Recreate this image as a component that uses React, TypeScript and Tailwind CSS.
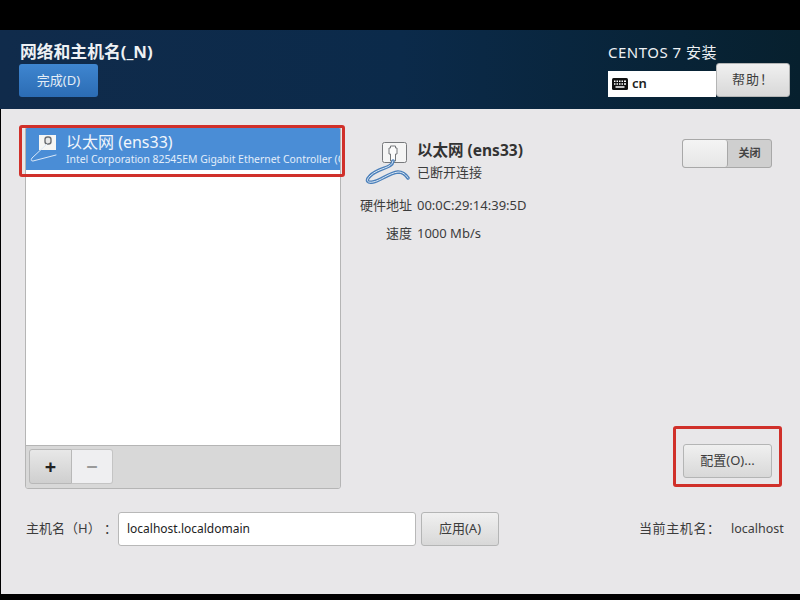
import React from "react";

const FONT = "font-['Noto_Sans','Noto_Sans_CJK_SC',sans-serif]";

const CableIcon = () => (
  <svg width="48" height="46" viewBox="0 0 48 46" fill="none">
    <rect x="17.5" y="1.5" width="24" height="20" rx="2" fill="#f5f5f5" stroke="#77797c" />
    <path d="M25.5 7 V5 H30.5 V7 H32 V13 H30.5 V20 H25.5 V13 H24 V7 Z" fill="#fbfbfb" stroke="#74777a" strokeWidth="1" />
    <path d="M28 20 C27 28 14 26 5 35 C0 40 3 42 8 41 C15 40 24 32 33 31 C38 31 41 34 43 37" stroke="#4a7fba" strokeWidth="3.4" strokeLinecap="round" />
    <path d="M28 20 C27 28 14 26 5 35 C0 40 3 42 8 41 C15 40 24 32 33 31 C38 31 41 34 43 37" stroke="#dce8f4" strokeWidth="1" strokeLinecap="round" />
  </svg>
);

const CableIconSelected = () => (
  <svg width="38" height="42" viewBox="0 0 38 42" fill="none">
    <rect x="10" y="7" width="17" height="15" fill="#f6f6f4" />
    <rect x="16" y="9" width="6" height="7" rx="2.5" fill="#e8e8e8" stroke="#6d6f72" strokeWidth="1.4" />
    <path d="M18 16 L3 30 Q1 33 4 33 L27 27" stroke="#dbe8f7" strokeWidth="1" strokeLinecap="round" />
  </svg>
);

const KeyboardIcon = () => (
  <svg width="16" height="12" viewBox="0 0 16 12">
    <rect width="16" height="12" rx="1.5" fill="#111" />
    <path d="M2 2.5h1.5v1.5H2zM4.5 2.5H6v1.5H4.5zM7 2.5h1.5v1.5H7zM9.5 2.5H11v1.5H9.5zM12 2.5h2v1.5h-2zM2 5.2h1.5v1.5H2zM4.5 5.2H6v1.5H4.5zM7 5.2h1.5v1.5H7zM9.5 5.2H11v1.5H9.5zM12 5.2h2v1.5h-2zM3.5 8.2h9v1.5h-9z" fill="#fff" />
  </svg>
);

const grayButton =
  "flex items-center justify-center rounded-[3px] border border-[#b4b5b5] bg-gradient-to-b from-[#f0f0f0] to-[#d8d8d8] text-[#3c3c3c]";

export default function App() {
  return (
    <div className={`${FONT} flex h-[600px] w-[800px] flex-col overflow-hidden bg-black`}>
      <div className="h-[30px] shrink-0 bg-black" />

      {/* header */}
      <div className="flex h-[79px] shrink-0 justify-between bg-gradient-to-r from-[#102b4b] via-[#0b2a4a] to-[#07202e] pr-[10px] pl-[19px]">
        <div className="flex flex-col">
          <div className="mt-[12px] ml-px h-[22px] text-[16.8px] leading-[20px] font-bold text-[#eef1f4]">网络和主机名(_N)</div>
          <button className="flex h-[33px] w-[79px] items-center justify-center rounded-[3px] bg-gradient-to-b from-[#3f86d0] to-[#2b6cb4] text-[13px] text-[#e4edf6]">
            完成(D)
          </button>
        </div>
        <div className="flex w-[182px] flex-col">
          <div className="mt-[12px] h-[21px] text-[15px] leading-[20px] tracking-[0.5px] text-[#eef1f4]">CENTOS 7 安装</div>
          <div className="flex items-start">
            <div className="mt-[8px] flex h-[26px] w-[108px] items-center gap-[4px] bg-white pl-[4px] text-[13px] font-semibold text-[#222]">
              <KeyboardIcon />
              cn
            </div>
            <button className={`${grayButton} h-[34px] w-[74px] text-[13px] tracking-[1px]`}>帮助！</button>
          </div>
        </div>
      </div>

      {/* body */}
      <div className="relative ml-px flex h-[485px] shrink-0 flex-col bg-[#e8e7e9]">
        <div className="flex h-[403px] shrink-0">
          <div className="mt-[17px] ml-[24px] flex h-[363px] w-[316px] shrink-0 flex-col overflow-hidden rounded-[3px] border border-[#b5b5b5]">
            <div className="flex-1 bg-white">
              <div className="flex h-[43px] items-center bg-[#4a8dd6] pl-[3px] whitespace-nowrap text-white">
                <div className="w-[37px] shrink-0">
                  <CableIconSelected />
                </div>
                <div className="overflow-hidden">
                  <div className="text-[16px] leading-[20px] text-[#f1f6fc]">以太网 (ens33)</div>
                  <div className="text-[10.4px] leading-[14px] text-[#e3eefa]">Intel Corporation 82545EM Gigabit Ethernet Controller (Copper)</div>
                </div>
              </div>
            </div>
            <div className="flex h-[43px] shrink-0 items-start border-t border-[#b5b5b5] bg-[#d8d8d8] pt-[3px] pl-[3px]">
              <button className="flex h-[35px] w-[43px] items-center justify-center rounded-l-[3px] border border-[#b8b8b8] bg-gradient-to-b from-[#e8e8e8] to-[#cfcfcf] text-[20px] font-bold text-[#222]">
                +
              </button>
              <button className="flex h-[35px] w-[41px] items-center justify-center rounded-r-[3px] border border-l-0 border-[#c4c4c4] bg-[#efeff1] text-[20px] font-bold text-[#9a9a9a]">
                −
              </button>
            </div>
          </div>

          <div className="flex flex-1 flex-col">
            <div className="mt-[30px] flex h-[52px] items-start pr-[28px] pl-[24px]">
              <div className="mt-[2px] shrink-0">
                <CableIcon />
              </div>
              <div className="ml-[4px] flex-1">
                <div className="mt-[1px] text-[15.5px] leading-[20px] font-bold text-[#333]">以太网 (ens33)</div>
                <div className="mt-[3px] text-[13px] leading-[18px] text-[#3c3c3c]">已断开连接</div>
              </div>
              <div className="flex h-[29px] w-[90px] overflow-hidden rounded-[3px] border border-[#a8a8a8] bg-[#cfcfcf]">
                <div className="w-[45px] rounded-[3px] border-r border-[#a8a8a8] bg-gradient-to-b from-[#f4f4f4] to-[#e6e6e6]" />
                <div className="flex flex-1 items-center justify-center text-[11px] font-bold text-[#444]">关闭</div>
              </div>
            </div>
            <div className="mt-[1px] flex h-[28px] items-center text-[13px] text-[#3c3c3c]">
              <div className="w-[71px] text-right">硬件地址</div>
              <div className="ml-[5px]">00:0C:29:14:39:5D</div>
            </div>
            <div className="flex h-[28px] items-center text-[13px] text-[#3c3c3c]">
              <div className="w-[71px] text-right">速度</div>
              <div className="ml-[5px]">1000 Mb/s</div>
            </div>
            <div className="flex flex-1 items-start justify-end pt-[196px] pr-[28px]">
              <button className={`${grayButton} h-[34px] w-[89px] text-[13px]`}>配置(O)...</button>
            </div>
          </div>
        </div>

        <div className="flex h-[34px] items-center text-[13px] text-[#3c3c3c]">
          <div className="ml-[25px] w-[92px] whitespace-pre">主机名（H） ：</div>
          <div className="flex h-[34px] w-[298px] items-center rounded-[3px] border border-[#b8b8b8] bg-white pl-[8px] text-[12px] text-[#222]">
            localhost.localdomain
          </div>
          <button className={`${grayButton} ml-[5px] h-[34px] w-[78px]`}>应用(A)</button>
          <div className="ml-[140px] w-[92px] tracking-[0.6px]">当前主机名：</div>
          <div className="text-[12.5px]">localhost</div>
        </div>

        {/* red annotation boxes drawn over the screenshot */}
        <div className="absolute top-[16px] left-[18px] h-[52px] w-[326px] rounded-[3px] border-[3px] border-[#d0302a]" />
        <div className="absolute top-[317px] left-[672px] h-[61px] w-[109px] rounded-[3px] border-[3px] border-[#d0302a]" />
      </div>

      <div className="flex-1 bg-black" />
    </div>
  );
}
